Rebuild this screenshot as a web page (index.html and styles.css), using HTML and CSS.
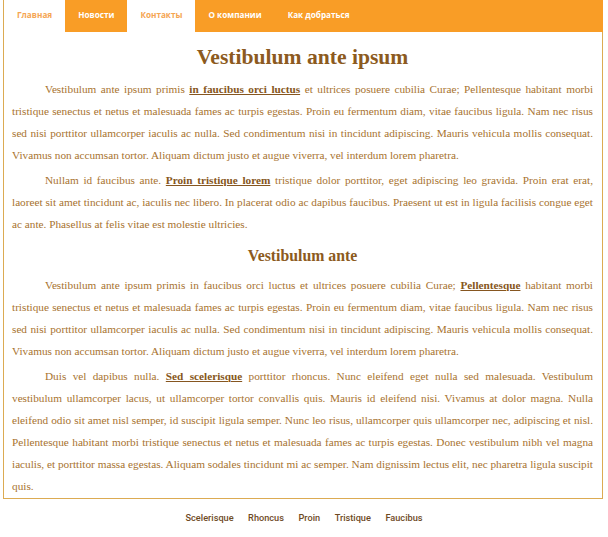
FILE: index.html
```
<!DOCTYPE html>
<html lang="ru">
<head>
<meta charset="utf-8">
<title>Vestibulum ante ipsum</title>
<link rel="stylesheet" href="styles.css">
</head>
<body>
<div class="page">
  <ul class="nav">
    <li class="nav-item active">Главная</li>
    <li class="nav-item">Новости</li>
    <li class="nav-item active">Контакты</li>
    <li class="nav-item">О компании</li>
    <li class="nav-item">Как добраться</li>
  </ul>
  <div class="content">
    <h1 class="title">Vestibulum ante ipsum</h1>
    <p class="para">Vestibulum ante ipsum primis <a class="link" href="#">in faucibus orci luctus</a> et ultrices posuere cubilia Curae; Pellentesque habitant morbi tristique senectus et netus et malesuada fames ac turpis egestas. Proin eu fermentum diam, vitae faucibus ligula. Nam nec risus sed nisi porttitor ullamcorper iaculis ac nulla. Sed condimentum nisi in tincidunt adipiscing. Mauris vehicula mollis consequat. Vivamus non accumsan tortor. Aliquam dictum justo et augue viverra, vel interdum lorem pharetra.</p>
    <p class="para">Nullam id faucibus ante. <a class="link" href="#">Proin tristique lorem</a> tristique dolor porttitor, eget adipiscing leo gravida. Proin erat erat, laoreet sit amet tincidunt ac, iaculis nec libero. In placerat odio ac dapibus faucibus. Praesent ut est in ligula facilisis congue eget ac ante. Phasellus at felis vitae est molestie ultricies.</p>
    <h2 class="subtitle">Vestibulum ante</h2>
    <p class="para">Vestibulum ante ipsum primis in faucibus orci luctus et ultrices posuere cubilia Curae; <a class="link" href="#">Pellentesque</a> habitant morbi tristique senectus et netus et malesuada fames ac turpis egestas. Proin eu fermentum diam, vitae faucibus ligula. Nam nec risus sed nisi porttitor ullamcorper iaculis ac nulla. Sed condimentum nisi in tincidunt adipiscing. Mauris vehicula mollis consequat. Vivamus non accumsan tortor. Aliquam dictum justo et augue viverra, vel interdum lorem pharetra.</p>
    <p class="para">Duis vel dapibus nulla. <a class="link" href="#">Sed scelerisque</a> porttitor rhoncus. Nunc eleifend eget nulla sed malesuada. Vestibulum vestibulum ullamcorper lacus, ut ullamcorper tortor convallis quis. Mauris id eleifend nisi. Vivamus at dolor magna. Nulla eleifend odio sit amet nisl semper, id suscipit ligula semper. Nunc leo risus, ullamcorper quis ullamcorper nec, adipiscing et nisl. Pellentesque habitant morbi tristique senectus et netus et malesuada fames ac turpis egestas. Donec vestibulum nibh vel magna iaculis, et porttitor massa egestas. Aliquam sodales tincidunt mi ac semper. Nam dignissim lectus elit, nec pharetra ligula suscipit quis.</p>
  </div>
</div>
<ul class="footer">
  <li class="footer-item">Scelerisque</li>
  <li class="footer-item">Rhoncus</li>
  <li class="footer-item">Proin</li>
  <li class="footer-item">Tristique</li>
  <li class="footer-item">Faucibus</li>
</ul>
</body>
</html>
```
FILE: styles.css
```
html, body {
  margin: 0;
  padding: 0;
  background: #ffffff;
}

.page {
  box-sizing: border-box;
  width: 600px;
  margin-left: 3px;
  border: 1px solid #dcab52;
  border-top: none;
}

.nav {
  display: flex;
  list-style: none;
  margin: 0 -1px 0 0;
  padding: 0;
  height: 32px;
  background: #f99d26;
}

.nav-item {
  padding: 0 13px;
  line-height: 30px;
  font-family: "Open Sans", "DejaVu Sans", sans-serif;
  font-weight: 700;
  font-size: 8.2px;
  color: #ffffff;
}

.nav-item.active {
  background: #ffffff;
  color: #f5a552;
}

.content {
  padding: 0 9px 0 8px;
  font-family: "Liberation Serif", "Times New Roman", serif;
}

.title {
  margin: 12px 0 8px;
  text-align: center;
  font-size: 21.6px;
  line-height: 26px;
  font-weight: 700;
  color: #8c5a20;
}

.subtitle {
  margin: 11px 0 8px;
  text-align: center;
  font-size: 15.8px;
  line-height: 20px;
  font-weight: 700;
  color: #8c5a20;
}

.para {
  margin: 0 0 3px;
  text-indent: 33px;
  text-align: justify;
  font-size: 11.25px;
  line-height: 22px;
  color: #a8732f;
}

.content .para:last-child {
  margin-bottom: 1px;
}

.link {
  font-weight: 700;
  color: #865620;
  text-decoration: underline;
}

.footer {
  display: flex;
  justify-content: center;
  gap: 14.5px;
  list-style: none;
  margin: 0;
  padding: 12px 0 0;
  width: 608px;
}

.footer-item {
  font-family: Roboto, "Liberation Sans", sans-serif;
  font-weight: 500;
  font-size: 9.2px;
  line-height: 14px;
  color: #6e4a1f;
}
```
